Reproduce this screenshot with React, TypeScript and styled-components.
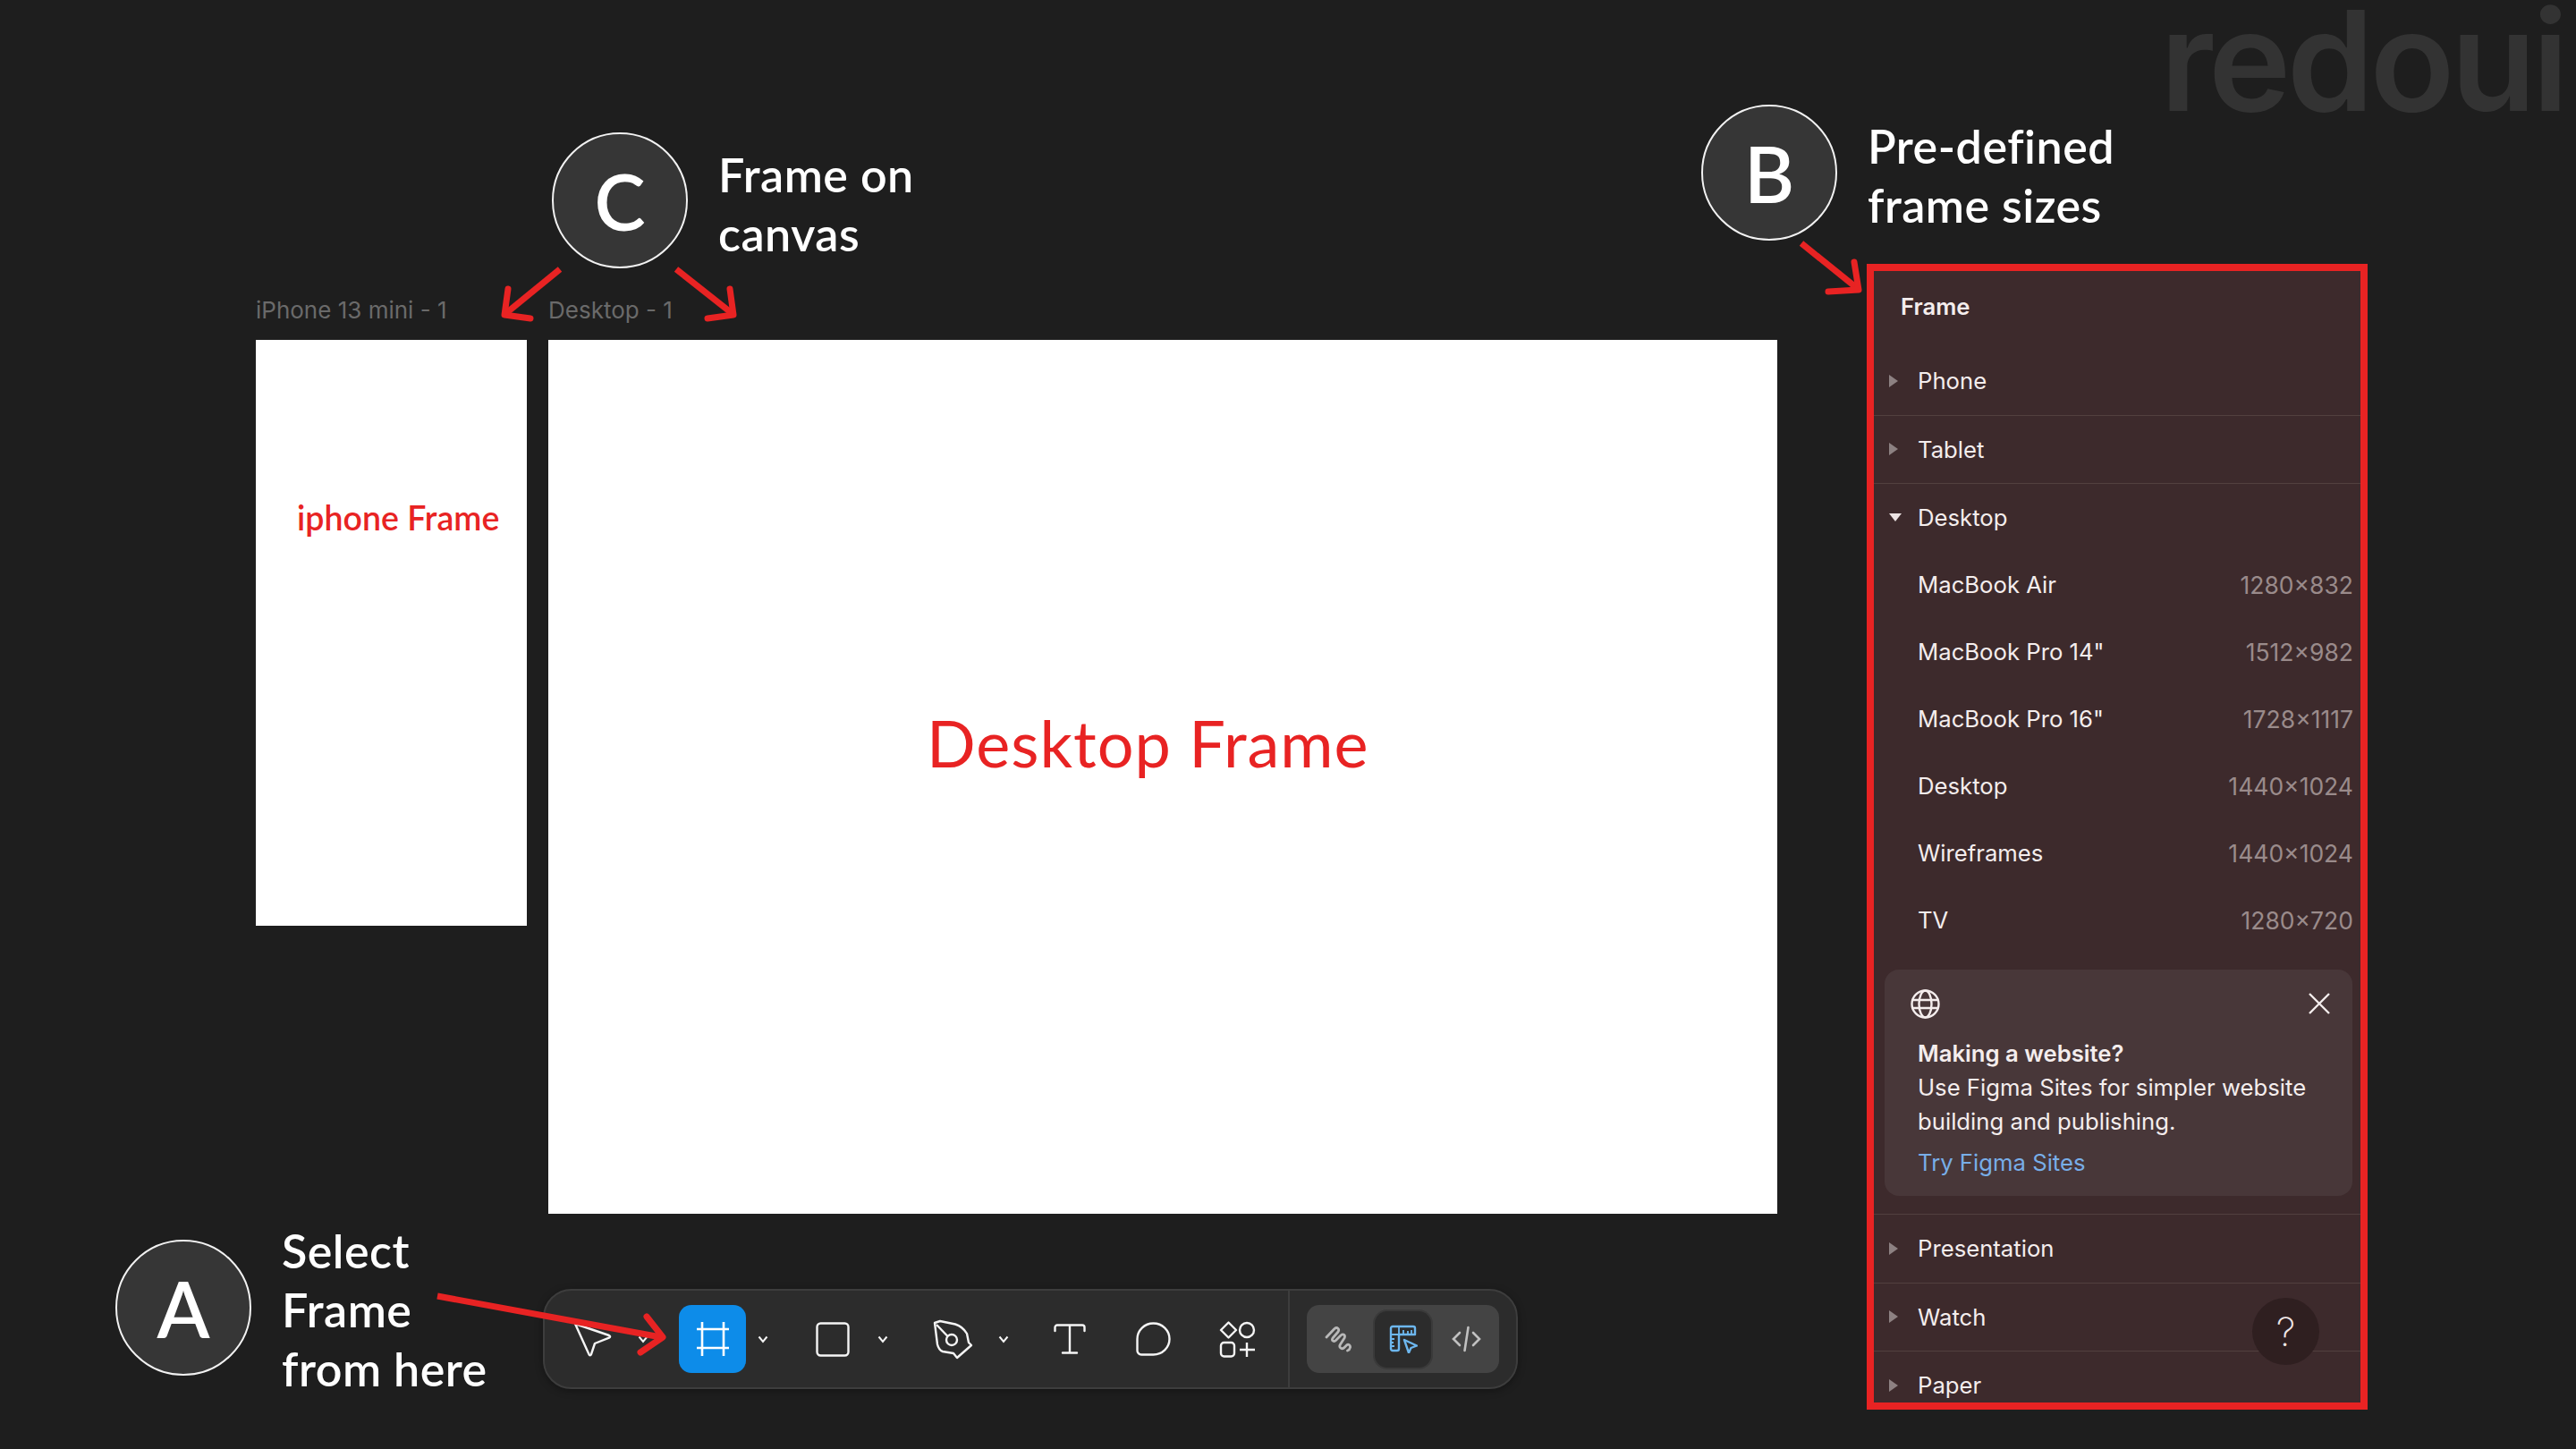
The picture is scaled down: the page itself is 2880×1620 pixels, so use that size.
import { createGlobalStyle, styled } from "styled-components";

const GlobalStyle = createGlobalStyle`
  html, body {
    margin: 0;
    padding: 0;
    background: #1e1e1e;
  }
`;

const sans = `Inter, "Liberation Sans", sans-serif`;
const round = `Lato, "Open Sans", sans-serif`;

const Canvas = styled.div`
  position: relative;
  width: 2880px;
  height: 1620px;
  overflow: hidden;
  background: #1e1e1e;
  font-family: ${sans};
`;

const Watermark = styled.div`
  position: absolute;
  left: 2415px;
  top: 8px;
  font-size: 156px;
  line-height: 119px;
  font-weight: 600;
  letter-spacing: -4.5px;
  color: #333333;
`;

const Callout = styled.div<{ $x: number; $y: number }>`
  position: absolute;
  left: ${(p) => p.$x}px;
  top: ${(p) => p.$y}px;
  display: flex;
  align-items: center;
  gap: 34px;
`;

const Badge = styled.div`
  width: 152px;
  height: 152px;
  box-sizing: border-box;
  border: 2px solid #f2f2f2;
  border-radius: 50%;
  background: #363636;
  color: #fff;
  font-family: ${round};
  font-size: 86px;
  font-weight: 600;
  display: flex;
  align-items: center;
  justify-content: center;
`;

const Note = styled.div<{ $pad: number }>`
  padding-top: ${(p) => p.$pad}px;
  color: #fff;
  font-family: ${round};
  font-size: 52px;
  font-weight: 600;
  letter-spacing: 0.5px;
  line-height: 66px;
  white-space: pre-line;
`;

const FrameBlock = styled.div<{ $x: number; $w: number; $h: number }>`
  position: absolute;
  left: ${(p) => p.$x}px;
  top: 380px;
  width: ${(p) => p.$w}px;
  height: ${(p) => p.$h}px;
  background: #fff;
`;

const FrameLabel = styled.div`
  position: absolute;
  left: 0;
  top: -50px;
  font-size: 26px;
  line-height: 34px;
  color: #6a6a6a;
  white-space: nowrap;
`;

const FrameText = styled.div<{ $x: number; $y: number; $size: number; $weight: number; $spacing: number }>`
  position: absolute;
  left: ${(p) => p.$x}px;
  top: ${(p) => p.$y}px;
  color: #e82323;
  font-family: ${round};
  font-size: ${(p) => p.$size}px;
  font-weight: ${(p) => p.$weight};
  letter-spacing: ${(p) => p.$spacing}px;
  line-height: 1.2;
  white-space: nowrap;
`;

const Panel = styled.aside`
  position: absolute;
  left: 2087px;
  top: 295px;
  width: 560px;
  height: 1281px;
  box-sizing: border-box;
  border: 8px solid #e82323;
  background: #3d2a2c;
  color: #f4eded;
  overflow: hidden;
  font-size: 25.7px;
`;

const PanelTitle = styled.div`
  height: 78px;
  margin-bottom: 7px;
  padding-left: 30px;
  display: flex;
  align-items: center;
  font-weight: 600;
`;

const SectionRow = styled.div<{ $line?: boolean; $open?: boolean }>`
  height: ${(p) => (p.$open ? 74 : 75.5)}px;
  flex: none;
  display: flex;
  align-items: center;
  border-bottom: 1px solid ${(p) => (p.$line ? "#52403f" : "transparent")};
`;

const Caret = styled.span<{ $open?: boolean }>`
  width: 49px;
  padding-left: 17px;
  box-sizing: border-box;
  display: flex;
  align-items: center;

  &::before {
    content: "";
    width: 0;
    height: 0;
    ${(p) =>
      p.$open
        ? `border-left: 7px solid transparent;
           border-right: 7px solid transparent;
           border-top: 9px solid #ece3e3;`
        : `border-top: 7px solid transparent;
           border-bottom: 7px solid transparent;
           border-left: 10px solid #8d8182;`}
  }
`;

const PresetRow = styled.div`
  height: 75px;
  padding: 0 8px 0 49px;
  display: flex;
  align-items: center;
  justify-content: space-between;
`;

const PresetSize = styled.span`
  color: #9a8b8b;
  font-size: 26.5px;
`;

const PromoCard = styled.div`
  margin: 18px 9px 20px 12px;
  height: 253px;
  box-sizing: border-box;
  padding: 20px 25px 18px 29px;
  border-radius: 16px;
  background: #483739;
`;

const PromoHead = styled.div`
  height: 36px;
  margin-bottom: 19px;
  display: flex;
  align-items: center;
  justify-content: space-between;
`;

const PromoBody = styled.div`
  padding-left: 8px;
  line-height: 38px;
  white-space: nowrap;

  b {
    font-weight: 600;
    display: block;
  }
`;

const PromoLink = styled.a`
  display: block;
  margin-top: 8px;
  color: #78aee8;
`;

const Divider = styled.div`
  height: 1px;
  background: #52403f;
`;

const HelpButton = styled.div`
  position: absolute;
  left: 423px;
  top: 1148px;
  width: 75px;
  height: 75px;
  border-radius: 50%;
  background: #2f1f20;
  color: #f0e6e6;
  font-size: 44px;
  font-weight: 200;
  display: flex;
  align-items: center;
  justify-content: center;
`;

const Toolbar = styled.div`
  position: absolute;
  left: 607px;
  top: 1441px;
  width: 1090px;
  height: 112px;
  box-sizing: border-box;
  border: 2px solid #3d3d3d;
  border-radius: 32px;
  background: #2c2c2c;
  box-shadow: 0 2px 8px rgba(0, 0, 0, 0.35);
  display: flex;
  align-items: center;
  color: #f5f5f5;
`;

const Tool = styled.div<{ $ml: number; $active?: boolean }>`
  width: 75px;
  height: 76px;
  margin-left: ${(p) => p.$ml}px;
  flex: none;
  border-radius: 14px;
  background: ${(p) => (p.$active ? "#0d8ce9" : "transparent")};
  display: flex;
  align-items: center;
  justify-content: center;
`;

const Chevron = styled.div`
  width: 20px;
  margin-left: 9px;
  flex: none;
  display: flex;
  justify-content: center;
`;

const ToolbarDivider = styled.div`
  width: 2px;
  height: 108px;
  margin-left: 19px;
  flex: none;
  background: #3d3d3d;
`;

const ModeGroup = styled.div`
  width: 215px;
  height: 76px;
  margin-left: 19px;
  flex: none;
  border-radius: 14px;
  background: #444444;
  display: flex;
  align-items: center;
  justify-content: space-between;
  padding: 0 5px;
  box-sizing: border-box;
`;

const ModeTab = styled.div<{ $active?: boolean }>`
  width: 63px;
  height: 63px;
  border-radius: 14px;
  background: ${(p) => (p.$active ? "#2c2c2c" : "transparent")};
  box-shadow: ${(p) => (p.$active ? "0 0 0 2px #3a3a3a" : "none")};
  display: flex;
  align-items: center;
  justify-content: center;
`;

const ArrowLayer = styled.svg`
  position: absolute;
  left: 0;
  top: 0;
  pointer-events: none;
`;

const ChevronIcon = () => (
  <svg width="12" height="9" viewBox="0 0 12 9" fill="none" stroke="currentColor" strokeWidth="2">
    <path d="M1.500 1.500 6 7l4.500-5.500" />
  </svg>
);

const CursorIcon = () => (
  <svg width="43" height="39" viewBox="0 0 43 39" fill="none" stroke="currentColor" strokeWidth="2.4" strokeLinejoin="round">
    <path d="M2 2 40 15c1.500.6 1.500 2 0 2.600L24 24l-4 12c-.6 1.600-2 1.600-2.600 0z" />
  </svg>
);

const FrameIcon = () => (
  <svg width="36" height="38" viewBox="0 0 36 38" fill="none" stroke="#fff" strokeWidth="2.6">
    <path d="M6 0v38M30 0v38M0 8h36M0 29h36" />
  </svg>
);

const RectIcon = () => (
  <svg width="38" height="39" viewBox="0 0 38 39" fill="none" stroke="currentColor" strokeWidth="2.4">
    <rect x="1.500" y="1.500" width="35" height="36" rx="4" />
  </svg>
);

const PenIcon = () => (
  <svg width="45" height="45" viewBox="0 0 45 45" fill="none" stroke="currentColor" strokeWidth="2.4" strokeLinejoin="round">
    <path d="M2 4 8 2l17 3.500C30 7 35 11 38 16l2 10 3 3-16 14-4-5-12-2c-3-1-5-4-6-8z" />
    <circle cx="21" cy="23" r="6" />
    <path d="M4 6 16.500 19" />
  </svg>
);

const TextIcon = () => (
  <svg width="36" height="34" viewBox="0 0 36 34" fill="none" stroke="currentColor" strokeWidth="2.4" strokeLinecap="round">
    <path d="M1.500 8V4a2.500 2.500 0 0 1 2.500-2.500h28A2.500 2.500 0 0 1 34.500 4v4M18 1.500v31M10 32.500h16" />
  </svg>
);

const CommentIcon = () => (
  <svg width="39" height="38" viewBox="0 0 39 38" fill="none" stroke="currentColor" strokeWidth="2.4">
    <path d="M19.500 1.500a18 17.500 0 0 1 0 35H6a4.500 4.500 0 0 1-4.500-4.500V19a18 17.500 0 0 1 18-17.500z" />
  </svg>
);

const ActionsIcon = () => (
  <svg width="41" height="41" viewBox="0 0 41 41" fill="none" stroke="currentColor" strokeWidth="2.4" strokeLinejoin="round">
    <path d="M10.500 1.500 19 10l-8.500 8.500L2 10z" />
    <circle cx="31" cy="10" r="8" />
    <rect x="2" y="24" width="15" height="15.500" rx="3.500" />
    <path d="M31 24v16M23 32h17" />
  </svg>
);

const DrawIcon = () => (
  <svg width="33" height="30" viewBox="0 0 33 30" fill="none" stroke="#b8b8b8" strokeWidth="2.800" strokeLinecap="round" strokeLinejoin="round">
    <path d="M2 13 11 3.500c3-2.500 6 .5 4 3.500l-6 7c-2 3 1.500 4.500 3.500 2.500L18 11c3-2.500 5.500 0 4 3l-4.500 7c-2 3 1 6 4 4l3-3c2-2 4.500 0 4 2.500-.5 2.500-1.500 3-3 3.500" />
  </svg>
);

const DevIcon = () => (
  <svg width="32" height="32" viewBox="0 0 32 32" fill="none" stroke="#6db7ef" strokeWidth="2.4" strokeLinejoin="round">
    <path d="M4 2h23a2 2 0 0 1 2 2v7H11v16a2 2 0 0 1-2 2H4a2 2 0 0 1-2-2V4a2 2 0 0 1 2-2z" />
    <path d="M11 2v9l-9 0M16 6v5M21 7v4M25 6v5M2 16h4M2 20h3M2 24h4" strokeWidth="1.800" />
    <path d="M17 17l14 6.500-6.500 2.500-2.500 5.500z" />
  </svg>
);

const CodeIcon = () => (
  <svg width="33" height="30" viewBox="0 0 33 30" fill="none" stroke="#c0c0c0" strokeWidth="2.6" strokeLinecap="round">
    <path d="M9 8 2 15l7 7M24 8l7 7-7 7M18.500 2l-4 26" />
  </svg>
);

const GlobeIcon = () => (
  <svg width="33" height="33" viewBox="0 0 33 33" fill="none" stroke="#f4eded" strokeWidth="2.400">
    <circle cx="16.500" cy="16.500" r="15" />
    <ellipse cx="16.500" cy="16.500" rx="7" ry="15" />
    <path d="M1.500 12h30M1.500 21h30" />
  </svg>
);

const CloseIcon = () => (
  <svg width="24" height="24" viewBox="0 0 24 24" fill="none" stroke="#f4eded" strokeWidth="2.400">
    <path d="M1 1l22 22M23 1 1 23" />
  </svg>
);

const Arrow = ({ line, head }: { line: string; head: string }) => (
  <g fill="none" stroke="#e82323" strokeWidth="7" strokeLinecap="round" strokeLinejoin="round">
    <path d={line} strokeLinecap="butt" />
    <path d={head} />
  </g>
);

const desktopPresets = [
  { name: "MacBook Air", size: "1280×832" },
  { name: 'MacBook Pro 14"', size: "1512×982" },
  { name: 'MacBook Pro 16"', size: "1728×1117" },
  { name: "Desktop", size: "1440×1024" },
  { name: "Wireframes", size: "1440×1024" },
  { name: "TV", size: "1280×720" },
];

export default function App() {
  return (
    <Canvas>
      <GlobalStyle />
      <Watermark>redoui</Watermark>

      <Callout $x={617} $y={148}>
        <Badge>C</Badge>
        <Note $pad={8}>{"Frame on\ncanvas"}</Note>
      </Callout>
      <Callout $x={1902} $y={117}>
        <Badge>B</Badge>
        <Note $pad={6}>{"Pre-defined\nframe sizes"}</Note>
      </Callout>
      <Callout $x={129} $y={1361}>
        <Badge>A</Badge>
        <Note $pad={4}>{"Select\nFrame\nfrom here"}</Note>
      </Callout>

      <FrameBlock $x={286} $w={303} $h={655}>
        <FrameLabel>iPhone 13 mini - 1</FrameLabel>
        <FrameText $x={46} $y={176} $size={37.5} $weight={600} $spacing={0}>iphone Frame</FrameText>
      </FrameBlock>
      <FrameBlock $x={613} $w={1374} $h={977}>
        <FrameLabel>Desktop - 1</FrameLabel>
        <FrameText $x={423} $y={407} $size={72} $weight={400} $spacing={1}>Desktop Frame</FrameText>
      </FrameBlock>

      <Panel>
        <PanelTitle>Frame</PanelTitle>
        <SectionRow $line><Caret />Phone</SectionRow>
        <SectionRow $line><Caret />Tablet</SectionRow>
        <SectionRow $open><Caret $open />Desktop</SectionRow>
        {desktopPresets.map((preset) => (
          <PresetRow key={preset.name}>
            <span>{preset.name}</span>
            <PresetSize>{preset.size}</PresetSize>
          </PresetRow>
        ))}
        <PromoCard>
          <PromoHead>
            <GlobeIcon />
            <CloseIcon />
          </PromoHead>
          <PromoBody>
            <b>Making a website?</b>
            Use Figma Sites for simpler website
            <br />
            building and publishing.
            <PromoLink>Try Figma Sites</PromoLink>
          </PromoBody>
        </PromoCard>
        <Divider />
        <SectionRow $line><Caret />Presentation</SectionRow>
        <SectionRow $line><Caret />Watch</SectionRow>
        <SectionRow><Caret />Paper</SectionRow>
        <HelpButton>?</HelpButton>
      </Panel>

      <Toolbar>
        <Tool $ml={16}><CursorIcon /></Tool>
        <Chevron><ChevronIcon /></Chevron>
        <Tool $ml={30} $active><FrameIcon /></Tool>
        <Chevron><ChevronIcon /></Chevron>
        <Tool $ml={30}><RectIcon /></Tool>
        <Chevron><ChevronIcon /></Chevron>
        <Tool $ml={31}><PenIcon /></Tool>
        <Chevron><ChevronIcon /></Chevron>
        <Tool $ml={26}><TextIcon /></Tool>
        <Tool $ml={19}><CommentIcon /></Tool>
        <Tool $ml={19}><ActionsIcon /></Tool>
        <ToolbarDivider />
        <ModeGroup>
          <ModeTab><DrawIcon /></ModeTab>
          <ModeTab $active><DevIcon /></ModeTab>
          <ModeTab><CodeIcon /></ModeTab>
        </ModeGroup>
      </Toolbar>

      <ArrowLayer width="2880" height="1620" viewBox="0 0 2880 1620">
        <Arrow line="M489 1449 739 1495" head="M723 1472 741 1495 716 1512" />
        <Arrow line="M626 301 566 350" head="M568 323 564 352 593 356" />
        <Arrow line="M756 301 818 350" head="M816 323 820 352 791 356" />
        <Arrow line="M2014 272 2076 322" head="M2073 293 2078 324 2044 326" />
      </ArrowLayer>
    </Canvas>
  );
}
